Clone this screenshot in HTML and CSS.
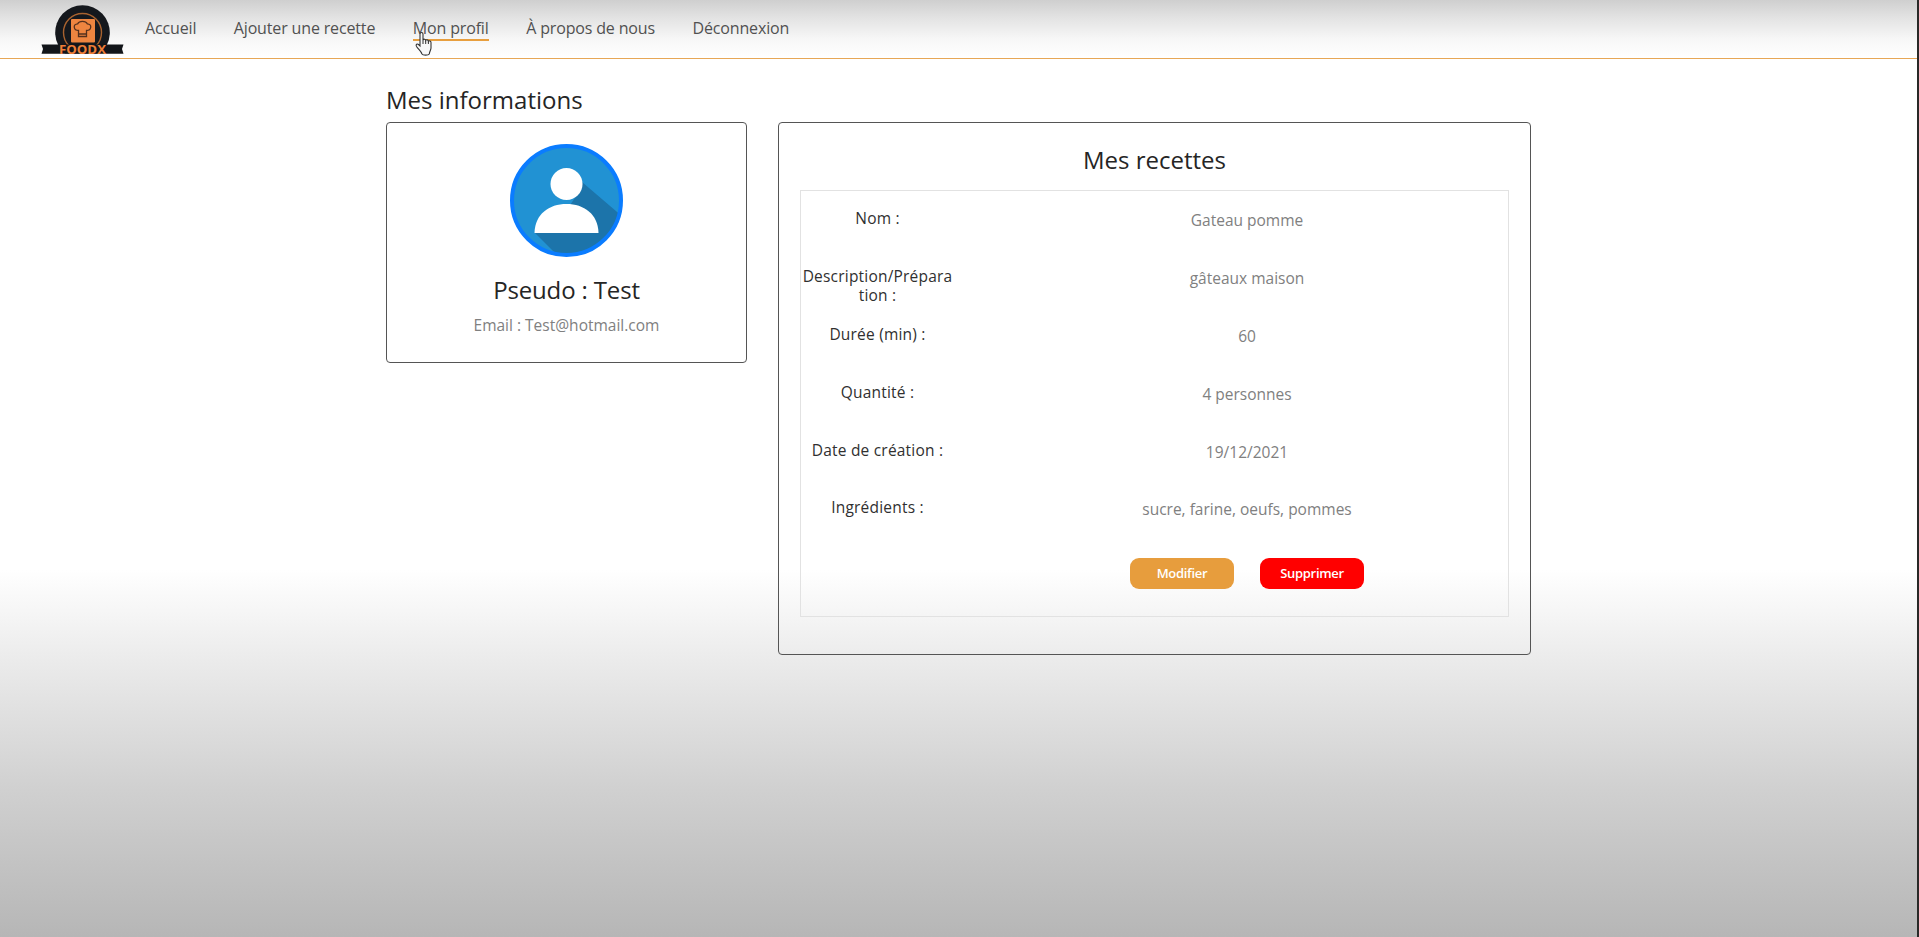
FILE: index.html
```html
<!DOCTYPE html>
<html lang="fr">
<head>
<meta charset="utf-8">
<title>FoodX - Mon profil</title>
<link rel="stylesheet" href="styles.css">
</head>
<body>
<header class="navbar">
  <svg class="logo" viewBox="0 0 84 52" role="img" aria-label="FOODX">
    <path d="M24 48.500A27.300 27.300 0 1 1 59 48.500z" fill="#15181d"/>
    <circle cx="41.500" cy="27.500" r="19" fill="none" stroke="#a8622f" stroke-width="1.400"/>
    <rect x="30" y="14" width="24" height="23.500" rx="1" fill="#ee8540"/>
    <path d="M37.500 31.500v-6c-5 0-6-6.500-.8-6.700 1.500-3.200 8-3.200 9.600 0 5.200.2 4.200 6.700-.8 6.700v6zM37.500 29h8" fill="none" stroke="#54301d" stroke-width="1.300"/>
    <path d="M.5 39.500h82l-1.500 4.500 1.500 4.700H.5L2 44z" fill="#121519"/>
    <text class="logo-text" x="41.500" y="48.800" text-anchor="middle" textLength="47" lengthAdjust="spacingAndGlyphs">FOODX</text>
  </svg>
  <nav class="links">
    <a class="link home">Accueil</a>
    <a class="link add">Ajouter une recette</a>
    <a class="link profile active">Mon profil</a>
    <a class="link about">À propos de nous</a>
    <a class="link logout">Déconnexion</a>
  </nav>
  <svg class="cursor" viewBox="0 0 20 26">
    <path d="M6 15V3.200c0-2.200 3-2.200 3 0V9c.5-1.300 2.600-1 2.700.5.700-1.200 2.600-.8 2.700.8.900-1 2.600-.4 2.600 1.200V17c0 2-1.500 3.500-1.700 6-1 1.500-6.500 1.500-7.300 0-.7-2.500-3.500-4.500-5.500-7.500-1.200-2 .8-3.200 2-2z" fill="#f8f8f8" stroke="#333" stroke-width="1.100"/>
    <path d="M9 9v4M11.700 10v3M14.400 10.500V13" stroke="#333" stroke-width="1"/>
  </svg>
</header>
<main class="page">
  <section class="info">
    <h1 class="title info-title">Mes informations</h1>
    <div class="card user">
      <svg class="avatar" viewBox="0 0 113 113">
        <defs><clipPath id="disc"><circle cx="56.500" cy="56.500" r="53.500"/></clipPath></defs>
        <circle cx="56.500" cy="56.500" r="55" fill="#2192d3"/>
        <path clip-path="url(#disc)" d="M25 89L50 114H114V74L72 38 67 51 60 61 88 88z" fill="#1c74aa"/>
        <circle cx="56.500" cy="56.500" r="54.500" fill="none" stroke="#0a7cff" stroke-width="4"/>
        <circle cx="56.500" cy="40" r="16" fill="#fff"/>
        <path d="M24.500 89C25 70 39 60 56.500 60S88 70 88.500 89z" fill="#fff"/>
      </svg>
      <h2 class="title pseudo">Pseudo : Test</h2>
      <p class="value email">Email : Test@hotmail.com</p>
    </div>
  </section>
  <section class="card recipes">
    <h2 class="title">Mes recettes</h2>
    <div class="recipe">
      <div class="row"><div class="label">Nom :</div><div class="value">Gateau pomme</div></div>
      <div class="row"><div class="label">Description/Prépara<br>tion :</div><div class="value">gâteaux maison</div></div>
      <div class="row"><div class="label">Durée (min) :</div><div class="value">60</div></div>
      <div class="row"><div class="label">Quantité :</div><div class="value">4 personnes</div></div>
      <div class="row"><div class="label">Date de création :</div><div class="value">19/12/2021</div></div>
      <div class="row"><div class="label">Ingrédients :</div><div class="value">sucre, farine, oeufs, pommes</div></div>
      <div class="actions"><button class="btn edit">Modifier</button><button class="btn delete">Supprimer</button></div>
    </div>
  </section>
</main>
</body>
</html>
```
FILE: styles.css
```css
* { box-sizing: border-box; }
body {
  margin: 0;
  height: 937px;
  overflow: hidden;
  font-family: "Open Sans", "Noto Sans", sans-serif;
  border-right: 2px solid #292927;
  background: linear-gradient(#fff 0, #fff 570px, #f5f5f5 615px, #ebebeb 660px, #d0d0d0 790px, #b6b6b6 937px);
}
.navbar {
  position: relative;
  height: 59px;
  display: flex;
  align-items: flex-start;
  padding-left: 41px;
  border-bottom: 1px solid #e7a757;
  background: linear-gradient(#cfcfcf, #e2e2e2 17px, #f7f7f7 39px, #fff);
}
.logo { width: 84px; height: 52px; margin-top: 5px; flex: none; overflow: visible; }
.logo-text { font: 700 13px "Open Sans", sans-serif; fill: #ee7e37; }
.links { display: flex; margin: 15px 0 0 20px; gap: 37.500px; }
.link { height: 26px; font-size: 16px; line-height: 26px; color: #515151; white-space: nowrap; letter-spacing: -.15px; }
.active { border-bottom: 2px solid #e89f3e; }
.cursor { position: absolute; left: 414px; top: 31px; width: 20px; height: 26px; }
.page { display: flex; align-items: flex-start; gap: 31px; padding-left: 386px; }
.info { width: 361px; padding-top: 24px; }
.title { margin: 0; font-size: 24px; line-height: 34px; font-weight: 400; color: #252525; text-align: center; }
.info-title { height: 39px; text-align: left; }
.card { border: 1px solid #555; border-radius: 4px; }
.user { height: 241px; padding-top: 21px; text-align: center; }
.avatar { display: block; width: 113px; height: 113px; margin: 0 auto; }
.pseudo { margin-top: 16px; letter-spacing: -.15px; }
.value { color: #808080; font-size: 15.500px; line-height: 24px; text-align: center; white-space: nowrap; }
.email { margin: 6px 0 0; }
.recipes { width: 753px; height: 533px; margin-top: 63px; padding: 20px 21px; }
.recipe { height: 427px; margin-top: 13px; padding-top: 18px; border: 1px solid #e2e2e2; }
.row { height: 57.900px; display: grid; grid-template-columns: 155px 1fr; }
.row .value { padding-left: 30px; line-height: 23.500px; }
.label { font-size: 15.500px; line-height: 19.500px; color: #303030; text-align: center; white-space: nowrap; letter-spacing: .2px; padding-right: 2px; }
.actions { display: flex; gap: 26px; padding: 1.600px 0 0 329px; }
.btn { width: 104px; height: 31px; padding: 0; border: 0; border-radius: 9px; color: #fff; font: 600 13px "Open Sans", sans-serif; letter-spacing: -.3px; }
.edit { background: #e79d3d; }
.delete { background: #f00; }
```
